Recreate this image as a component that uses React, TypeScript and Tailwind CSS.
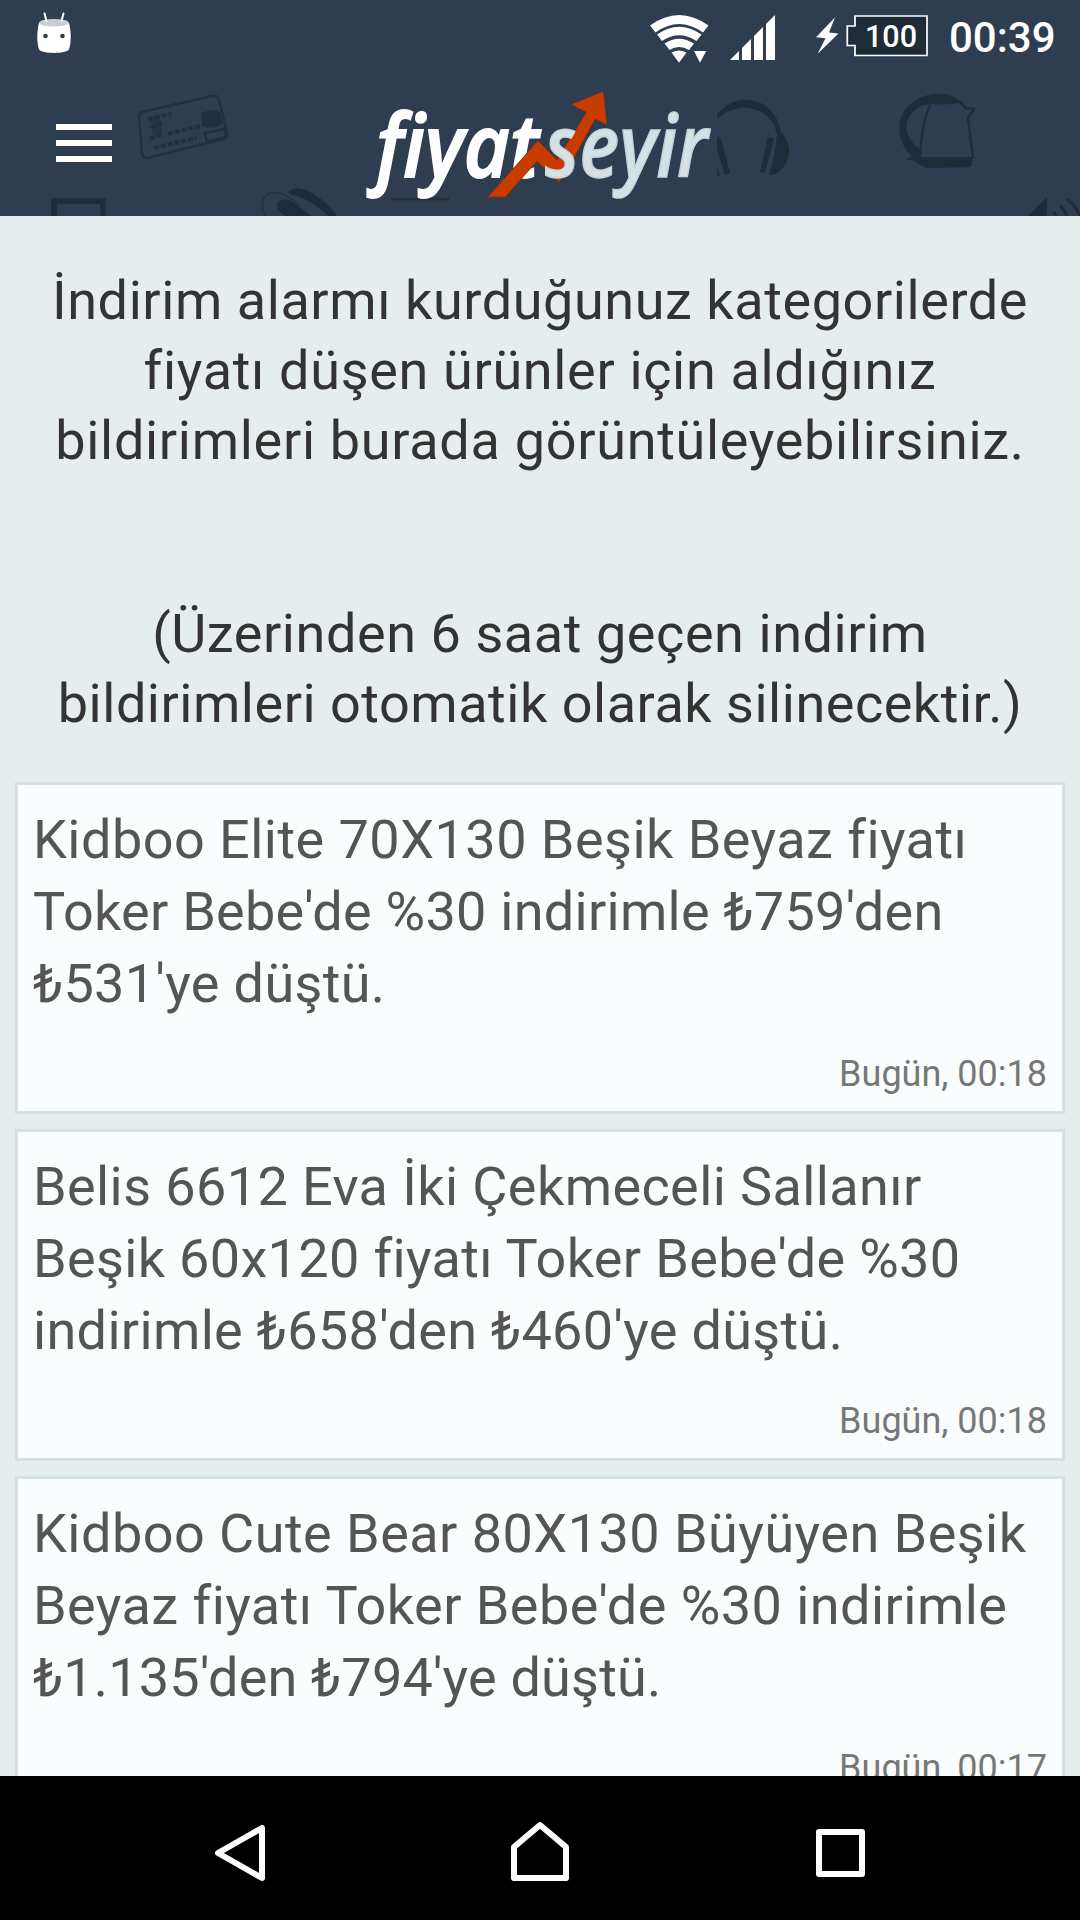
import type { ReactNode } from "react";

interface Line {
  text: string;
  tracking: string;
}

interface Notification {
  id: number;
  lines: Line[];
  date: string;
}

const notifications: Notification[] = [
  {
    id: 1,
    lines: [
      { text: "Kidboo Elite 70X130 Beşik Beyaz fiyatı", tracking: "tracking-[0.47px]" },
      { text: "Toker Bebe'de %30 indirimle ₺759'den", tracking: "tracking-[0.27px]" },
      { text: "₺531'ye düştü.", tracking: "tracking-[0.35px]" },
    ],
    date: "Bugün, 00:18",
  },
  {
    id: 2,
    lines: [
      { text: "Belis 6612 Eva İki Çekmeceli Sallanır", tracking: "tracking-[0.4px]" },
      { text: "Beşik 60x120 fiyatı Toker Bebe'de %30", tracking: "tracking-[0.34px]" },
      { text: "indirimle ₺658'den ₺460'ye düştü.", tracking: "tracking-[0.33px]" },
    ],
    date: "Bugün, 00:18",
  },
  {
    id: 3,
    lines: [
      { text: "Kidboo Cute Bear 80X130 Büyüyen Beşik", tracking: "tracking-[0.47px]" },
      { text: "Beyaz fiyatı Toker Bebe'de %30 indirimle", tracking: "tracking-[0.46px]" },
      { text: "₺1.135'den ₺794'ye düştü.", tracking: "tracking-[0.2px]" },
    ],
    date: "Bugün, 00:17",
  },
];

function AndroidIcon() {
  return (
    <svg width="34" height="42" viewBox="37 12 34 42">
      <path
        d="M39 23C42 18.500 66 18.500 69 23C71.300 31 71.300 43 69 49.500C66 54 42 54 39 49.500C36.700 43 36.700 31 39 23Z"
        fill="#fff"
      />
      <ellipse cx="54" cy="22.700" rx="14.800" ry="3.800" fill="#c9ccd0" />
      <path
        d="M44.500 13.500L46.500 21M63.500 13.500L61.500 21"
        stroke="#fff"
        strokeWidth="2"
        strokeLinecap="round"
      />
      <circle cx="45.500" cy="36" r="2.300" fill="#2e3d4f" />
      <circle cx="62.500" cy="36" r="2.300" fill="#2e3d4f" />
    </svg>
  );
}

function WifiIcon() {
  return (
    <svg width="59" height="49" viewBox="650 14 59 49" fill="#fff">
      <path d="M650 25.500Q679 4.500 708.500 25.500L703 32.500Q679 15.500 655.500 32.500Z" />
      <path d="M657 34.500Q679 19 701.500 34.500L696.500 41Q679 29.500 662 41Z" />
      <path d="M664.500 43.500Q679 34 694 43.500L689 50Q679 44 669.500 50Z" />
      <path d="M671.500 52.500Q679 48.500 686.500 52.500L679 62.700Z" />
      <path d="M694 51H706.200L700 62.700Z" />
    </svg>
  );
}

function SignalIcon() {
  return (
    <svg width="45" height="45" viewBox="730 15 45 45" fill="#fff">
      <path d="M730 60L739 51V60Z" />
      <path d="M742 60V48L751 39V60Z" />
      <path d="M754 60V36L763 27V60Z" />
      <path d="M766 60V24L775 15V60Z" />
    </svg>
  );
}

function BatteryIcon() {
  return (
    <svg width="112" height="42" viewBox="816 15 112 42">
      <path
        d="M835 17.500L816 37.200L825.500 38.300L817.500 54L838.500 33.500L829 32.500Z"
        fill="#fff"
      />
      <path
        d="M855 16H927V55.500H855V45.500H847.300V26H855Z"
        fill="#202b38"
        stroke="#fff"
        strokeWidth="1.700"
      />
      <text
        x="865"
        y="46.500"
        fill="#fff"
        fontFamily="Roboto, sans-serif"
        fontSize="32"
        fontWeight="500"
        textLength="52"
        lengthAdjust="spacingAndGlyphs"
      >
        100
      </text>
    </svg>
  );
}

// Faint shopping doodles behind the toolbar
function HeaderPattern() {
  return (
    <svg
      className="absolute inset-0"
      width="1080"
      height="216"
      viewBox="0 0 1080 216"
      fill="none"
      stroke="#1f2b38"
    >
      <g strokeWidth="2.500" opacity=".75">
        <path d="M142 112L212 96Q218 95 219 100L227 133Q228 138 223 139L147 158Q143 158 142 153L139 117Q139 113 142 112Z" />
        <path d="M205 133L224 129L226 137L207 142Z" />
        <path
          d="M148 119L171 114M151 128L162 123M150 139L162 134M154 148L196 138M168 134L200 126"
          strokeWidth="4"
          strokeDasharray="5 2"
        />
        <path d="M203 114Q211 110 219 113L221 123Q213 129 203 125Z" fill="#1f2b38" />
        <path
          d="M151 118L159 115L162 133L153 135Z"
          fill="#1f2b38"
          fillOpacity=".7"
          stroke="none"
        />
      </g>
      <path d="M54 216V201H103V216" strokeWidth="5.500" />
      <path d="M265 216Q257 196 273 192Q287 193 300 206" strokeWidth="1.500" opacity=".6" />
      <path
        d="M277 205Q279 196 293 202L312 216H286Q277 212 277 205Z"
        fill="#1f2b38"
        stroke="none"
      />
      <path
        d="M288 192Q296 184 312 193Q329 203 337 216H328Q308 197 291 195Z"
        fill="#1f2b38"
        stroke="none"
      />
      <path d="M391 199H449" strokeWidth="2.500" opacity=".8" />

      {/* Headphones */}
      <g fill="#1f2b38" stroke="none">
        <path d="M717 114C727 103 738 99 748 100C766 101 778 114 781 132C790 142 790 152 788 158C784 171 776 175 769 175Q775 158 777 134C774 122 768 116 761 112C745 104 730 108 717 119Z" />
        <path d="M768 137L774 138L765 173L760 172Z" />
        <path d="M717 136L721 138L730 173L725 175L717 150Z" />
        <path d="M717 166L720 175L717 176Z" />
      </g>

      {/* Kettle */}
      <path
        d="M961 102C948 89 925 93 913 102C894 115 896 142 912 156L906 159L914 161L922 166Q925 168 932 168L971 167L973 157L921 157L919 148C901 136 902 113 924 105C938 103 950 106 961 102Z"
        fill="#1f2b38"
        stroke="none"
      />
      <path
        d="M930 105Q921 126 920 158M960 102L966 108L974 109L968 118Q971 140 973 158"
        strokeWidth="2.300"
      />

      <path d="M1028 216L1047 197V216Z" fill="#1f2b38" stroke="none" />
      <path
        d="M1053 212Q1056 214 1056 216M1060 206Q1065 210 1067 216M1067 199Q1076 206 1080 216"
        strokeWidth="3"
      />
    </svg>
  );
}

function Logo() {
  return (
    <svg
      className="overflow-visible"
      width="350"
      height="116"
      viewBox="365 88 350 116"
      fontFamily="'Open Sans', sans-serif"
      fontStyle="italic"
      fontWeight="600"
      fontSize="86"
    >
      <text
        x="376"
        y="176.500"
        fill="#fff"
        stroke="#fff"
        strokeWidth="1.800"
        textLength="163"
        lengthAdjust="spacingAndGlyphs"
      >
        fiyat
      </text>
      <path
        d="M488 197L538 141L557 160L587 112L572 104.500L603 92L606.500 124L595 118.500L566 172L559 182L537 161L505 197Z"
        fill="#c83c00"
        stroke="#a82a0c"
        strokeWidth="1"
      />
      <text
        x="545"
        y="176.500"
        fill="#d5e1e5"
        stroke="#c3d4d9"
        strokeWidth="1.500"
        textLength="163"
        lengthAdjust="spacingAndGlyphs"
      >
        seyir
      </text>
      {/* Upper shaft passes in front of the "s" */}
      <path d="M569 143L587 112L572 104.500L603 92L606.500 124L595 118.500L575 154Z" fill="#c83c00" />
    </svg>
  );
}

function NavButton({ label, children }: { label: string; children: ReactNode }) {
  return (
    <button aria-label={label} className="flex h-[144px] w-[300px] items-center justify-center">
      <svg
        width="60"
        height="72"
        viewBox="0 0 60 72"
        fill="none"
        stroke="#fff"
        strokeWidth="6"
        strokeLinejoin="round"
      >
        {children}
      </svg>
    </button>
  );
}

export default function App() {
  return (
    <main className="flex h-[1920px] w-[1080px] flex-col overflow-hidden bg-[#e6edef] font-['Roboto',sans-serif]">
      {/* Header */}
      <header className="relative h-[216px] flex-shrink-0 bg-[#2e3d4f]">
        <HeaderPattern />
        <div className="relative flex h-[75px] items-start pl-[37px] pr-[24px] text-white">
          <div className="mt-[12px]">
            <AndroidIcon />
          </div>
          <div className="ml-auto mt-[14px]">
            <WifiIcon />
          </div>
          <div className="ml-[21px] mt-[15px]">
            <SignalIcon />
          </div>
          <div className="ml-[41px] mt-[15px]">
            <BatteryIcon />
          </div>
          <span className="ml-[21px] mt-[13px] w-[107px] whitespace-nowrap text-[42px] font-medium leading-[50px]">
            00:39
          </span>
        </div>
        <div className="relative flex items-start pl-[56px]">
          <button aria-label="Menü" className="mt-[49px] flex w-[56px] flex-col gap-[10px]">
            <span className="h-[6px] bg-white" />
            <span className="h-[6px] bg-white" />
            <span className="h-[6px] bg-white" />
          </button>
          <div className="ml-[253px] mt-[13px]">
            <Logo />
          </div>
        </div>
      </header>

      {/* Content */}
      <div className="flex h-[1560px] flex-shrink-0 flex-col overflow-hidden">
        <div className="h-[566px] flex-shrink-0 whitespace-nowrap pt-[50px] text-center text-[54px] leading-[70px] text-[#333]">
          <p>
            <span className="block tracking-[0.57px]">İndirim alarmı kurduğunuz kategorilerde</span>
            <span className="block tracking-[0.66px]">fiyatı düşen ürünler için aldığınız</span>
            <span className="block tracking-[0.7px]">
              bildirimleri burada görüntüleyebilirsiniz.
            </span>
          </p>
          <p className="mt-[123px]">
            <span className="block tracking-[0.57px]">(Üzerinden 6 saat geçen indirim</span>
            <span className="block tracking-[0.52px]">
              bildirimleri otomatik olarak silinecektir.)
            </span>
          </p>
        </div>

        <div className="flex flex-col gap-[15px] px-[15px]">
          {notifications.map((item) => (
            <article
              key={item.id}
              className="flex h-[332px] flex-shrink-0 flex-col border-[3px] border-[#d5e1e5] bg-[#f9fdfe] px-[15px] pb-[13px] pt-[19px]"
            >
              <p className="whitespace-nowrap text-[54px] leading-[72px] text-[#555]">
                {item.lines.map((line) => (
                  <span key={line.text} className={`block ${line.tracking}`}>
                    {line.text}
                  </span>
                ))}
              </p>
              <time className="mt-auto text-right text-[36px] leading-[48px] text-[#777]">
                {item.date}
              </time>
            </article>
          ))}
        </div>
      </div>

      {/* System navigation */}
      <nav className="flex h-[144px] flex-shrink-0 justify-center bg-black">
        <NavButton label="Geri">
          <path d="M52 16V66L8 41Z" />
        </NavButton>
        <NavButton label="Ana ekran">
          <path d="M30 13L56 35V66H4V35Z" />
        </NavButton>
        <NavButton label="Son uygulamalar">
          <path d="M9 20H52V62H9Z" />
        </NavButton>
      </nav>
    </main>
  );
}
